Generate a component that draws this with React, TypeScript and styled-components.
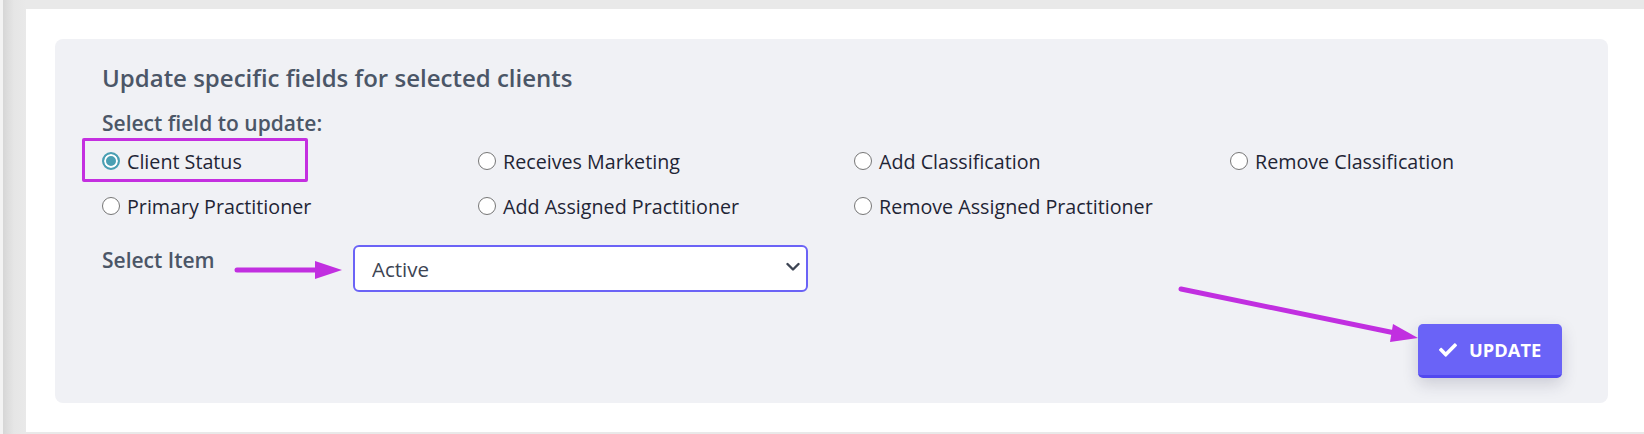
import React from "react";
import styled, { createGlobalStyle } from "styled-components";
import { FaCheck } from "react-icons/fa";

const GlobalStyle = createGlobalStyle`
  html, body { margin: 0; padding: 0; }
  body {
    background: #e9e9e9;
    font-family: "Open Sans", "Noto Sans", "Liberation Sans", sans-serif;
  }
  * { box-sizing: border-box; }
`;

const Page = styled.div`
  position: relative;
  width: 1644px;
  height: 434px;
  padding: 9px 0 2px 26px;
  background: #e9e9e9;
  &::before {
    content: "";
    position: absolute;
    left: 0;
    top: 0;
    bottom: 0;
    width: 26px;
    background: linear-gradient(90deg, #f3f3f3 0, #f3f3f3 3px, #d6d6d6 3px, #e6e6e6 14px, #e9e9e9 26px);
  }
`;

const Card = styled.div`
  height: 423px;
  background: #ffffff;
  padding: 30px 36px 29px 29px;
`;

const Panel = styled.section`
  height: 364px;
  background: #f0f1f5;
  border-radius: 8px;
  padding: 24px 46px 25px 47px;
  display: flex;
  flex-direction: column;
`;

const Heading = styled.h2`
  margin: 0;
  font-size: 24px;
  line-height: 30px;
  font-weight: 600;
  color: #4b5667;
`;

const SubHeading = styled.div`
  margin-top: 15.5px;
  font-size: 21px;
  line-height: 28px;
  font-weight: 600;
  color: #4b5667;
`;

const OptionsGrid = styled.div`
  margin-top: 10.5px;
  display: grid;
  grid-template-columns: 376px 376px 376px 1fr;
  row-gap: 17px;
`;

const Option = styled.label`
  position: relative;
  display: flex;
  align-items: center;
  gap: 7px;
  height: 28px;
  font-size: 19.7px;
  color: #1f2535;
  cursor: pointer;
`;

const RadioDot = styled.span<{ $checked: boolean }>`
  flex: none;
  width: 18px;
  height: 18px;
  border-radius: 50%;
  background: ${(p) => (p.$checked ? "#4a9fb3" : "#ffffff")};
  border: ${(p) => (p.$checked ? "2px solid #4a9fb3" : "1.5px solid #767676")};
  box-shadow: ${(p) => (p.$checked ? "inset 0 0 0 2px #ffffff" : "none")};
`;

const Highlight = styled.span`
  position: absolute;
  left: -20px;
  top: -9px;
  width: 226px;
  height: 44px;
  border: 3px solid #c42fe0;
  border-radius: 2px;
  pointer-events: none;
`;

const ItemRow = styled.div`
  margin-top: 25px;
  display: flex;
  align-items: flex-start;
`;

const ItemLabel = styled.div`
  width: 251px;
  margin-top: 1px;
  font-size: 21px;
  line-height: 28px;
  font-weight: 600;
  color: #4b5667;
`;

const SelectWrap = styled.div`
  position: relative;
  width: 455px;
  height: 47px;
`;

const Select = styled.select`
  appearance: none;
  -webkit-appearance: none;
  width: 100%;
  height: 100%;
  border: 2px solid #6b63f6;
  border-radius: 6px;
  background: #ffffff;
  padding: 0 40px 0 17px;
  font-family: inherit;
  font-size: 20.5px;
  color: #3d4453;
  outline: none;
`;

const Chevron = styled.svg`
  position: absolute;
  right: 8px;
  top: 17px;
  pointer-events: none;
`;

const ButtonRow = styled.div`
  margin-top: 32px;
  display: flex;
  justify-content: flex-end;
`;

const UpdateButton = styled.button`
  display: flex;
  align-items: center;
  gap: 12px;
  width: 144px;
  height: 54px;
  padding: 0 20px 0 21px;
  border: none;
  border-bottom: 3px solid #5248ef;
  border-radius: 5px;
  background: #6a63f7;
  color: #ffffff;
  font-family: inherit;
  font-size: 18.3px;
  font-weight: 700;
  box-shadow: 0 6px 16px rgba(40, 40, 70, 0.18);
  cursor: pointer;
`;

const Overlay = styled.svg`
  position: absolute;
  left: 0;
  top: 0;
  pointer-events: none;
`;

const options = [
  "Client Status",
  "Receives Marketing",
  "Add Classification",
  "Remove Classification",
  "Primary Practitioner",
  "Add Assigned Practitioner",
  "Remove Assigned Practitioner",
];

export default function App() {
  const [selected, setSelected] = React.useState("Client Status");
  return (
    <>
      <GlobalStyle />
      <Page>
        <Card>
          <Panel>
            <Heading>Update specific fields for selected clients</Heading>
            <SubHeading>Select field to update:</SubHeading>
            <OptionsGrid>
              {options.map((o) => (
                <Option key={o} onClick={() => setSelected(o)}>
                  {o === "Client Status" && <Highlight />}
                  <RadioDot $checked={selected === o} />
                  {o}
                </Option>
              ))}
            </OptionsGrid>
            <ItemRow>
              <ItemLabel>Select Item</ItemLabel>
              <SelectWrap>
                <Select defaultValue="Active">
                  <option>Active</option>
                  <option>Inactive</option>
                </Select>
                <Chevron width="14" height="10" viewBox="0 0 14 10">
                  <path d="M1.5 2 L7 7.5 L12.5 2" fill="none" stroke="#3d4453" strokeWidth="2.4" strokeLinecap="round" strokeLinejoin="round" />
                </Chevron>
              </SelectWrap>
            </ItemRow>
            <ButtonRow>
              <UpdateButton>
                <FaCheck size={18} />
                UPDATE
              </UpdateButton>
            </ButtonRow>
          </Panel>
        </Card>
        <Overlay width="1644" height="434" viewBox="0 0 1644 434">
          <line x1="237" y1="270" x2="318" y2="270" stroke="#c12fe0" strokeWidth="5" strokeLinecap="round" />
          <polygon points="315,261 342,270 315,279" fill="#c12fe0" />
          <line x1="1181" y1="289" x2="1395" y2="333" stroke="#c12fe0" strokeWidth="5" strokeLinecap="round" />
          <polygon points="1393,324 1418,338 1390,342" fill="#c12fe0" />
        </Overlay>
      </Page>
    </>
  );
}
